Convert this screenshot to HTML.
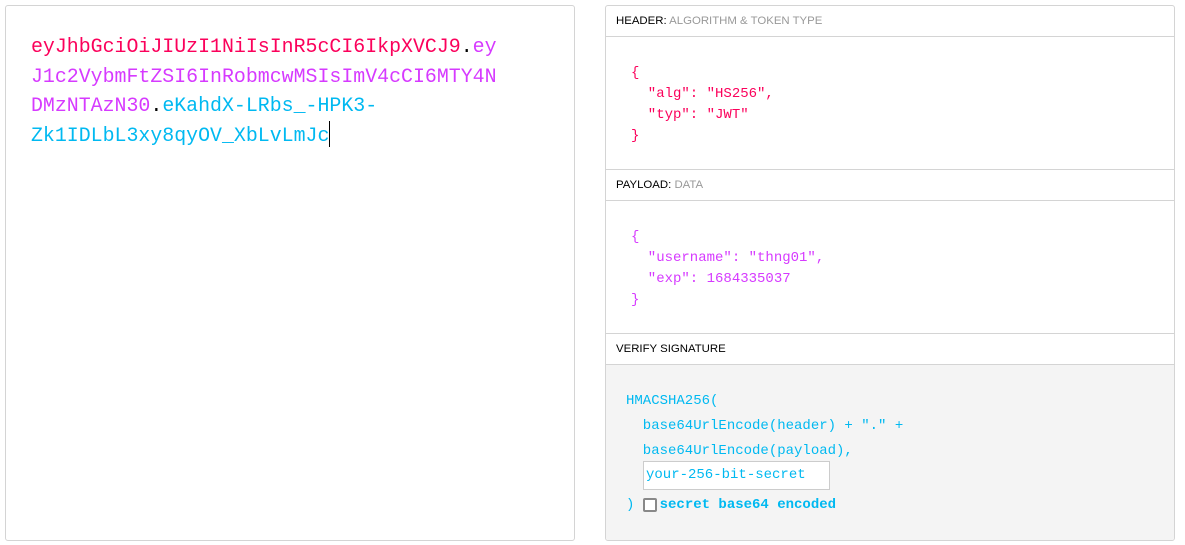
<!DOCTYPE html>
<html><head><style>
body{margin:0;width:1185px;height:545px;background:#fff;font-family:"Liberation Sans",sans-serif;position:relative;overflow:hidden}
.box{position:absolute;border:1px solid #d4d4d4;border-radius:3px;box-sizing:border-box}
.mono{font-family:"Liberation Mono",monospace}
.tok{position:absolute;left:31px;top:32px;font-size:19.9px;line-height:29.7px;white-space:pre}
.r{color:#fb015b}.p{color:#d63aff}.c{color:#00b9f1}
.hd{position:absolute;left:0;right:0;height:31px;border-bottom:1px solid #d4d4d4;box-sizing:border-box;font-size:11.4px;padding-left:10px;line-height:31px;color:#000}
.hd span{color:#999}
.sec{position:absolute;left:0;right:0;border-bottom:1px solid #d4d4d4;box-sizing:border-box}
.js{position:absolute;left:25px;font-size:14px;line-height:21px;white-space:pre}
</style></head><body>
<div class="box" style="left:5px;top:5px;width:570px;height:536px">
</div>
<div class="tok mono"><span class="r">eyJhbGciOiJIUzI1NiIsInR5cCI6IkpXVCJ9</span>.<span class="p">ey
J1c2VybmFtZSI6InRobmcwMSIsImV4cCI6MTY4N
DMzNTAzN30</span>.<span class="c">eKahdX-LRbs_-HPK3-
Zk1IDLbL3xy8qyOV_XbLvLmJc</span><span style="display:inline-block;width:1px;height:26px;background:#000;vertical-align:-6px"></span></div>
<div class="box" style="left:605px;top:5px;width:570px;height:536px;overflow:hidden">
 <div class="hd" style="top:0">HEADER: <span>ALGORITHM &amp; TOKEN TYPE</span></div>
 <div class="sec" style="top:31px;height:133px"><div class="js mono r" style="top:26px">{
  "alg": "HS256",
  "typ": "JWT"
}</div></div>
 <div class="hd" style="top:164px">PAYLOAD: <span>DATA</span></div>
 <div class="sec" style="top:195px;height:133px"><div class="js mono p" style="top:26px">{
  "username": "thng01",
  "exp": 1684335037
}</div></div>
 <div class="hd" style="top:328px">VERIFY SIGNATURE</div>
 <div style="position:absolute;top:359px;left:0;right:0;bottom:0;background:#f4f4f4">
  <div class="mono c" style="position:absolute;left:20px;top:24px;font-size:14px;line-height:25px;white-space:pre">HMACSHA256(
  base64UrlEncode(header) + "." +
  base64UrlEncode(payload),</div>
  <div class="mono c" style="position:absolute;left:37px;top:96px;width:187px;height:29px;box-sizing:border-box;border:1px solid #ccc;background:#fff;font-size:14px;line-height:27px;padding-left:2px">your-256-bit-secret</div>
  <div class="mono c" style="position:absolute;left:20px;top:130px;font-size:14px;line-height:20px;white-space:pre">)   <span style="font-weight:bold">secret base64 encoded</span></div>
  <div style="position:absolute;left:37px;top:133px;width:14px;height:14px;border:2px solid #888;border-radius:2px;background:#fff;box-sizing:border-box"></div>
 </div>
</div>
</body></html>
